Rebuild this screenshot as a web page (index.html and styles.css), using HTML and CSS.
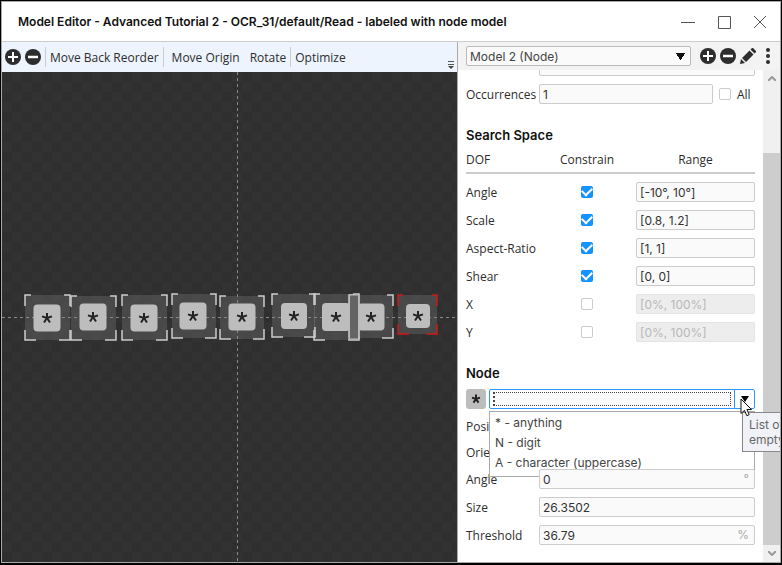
FILE: index.html
```html
<!DOCTYPE html>
<html lang="en">
<head>
    <meta charset="UTF-8">
    <meta name="viewport" content="width=device-width, initial-scale=1.0">
    <title>Model Editor</title>
    <link rel="stylesheet" href="styles.css">
</head>
<body>
    <!-- shared symbols -->
    <svg class="defs" aria-hidden="true">
        <symbol id="icon-plus" viewBox="0 0 16 16">
            <circle cx="8" cy="8" r="8" fill="#2d2d2d"/>
            <path d="M8 3v10M3 8h10" stroke="#fff" stroke-width="2"/>
        </symbol>
        <symbol id="icon-minus" viewBox="0 0 16 16">
            <circle cx="8" cy="8" r="8" fill="#2d2d2d"/>
            <path d="M3 8h10" stroke="#fff" stroke-width="2.5"/>
        </symbol>
    </svg>

    <div class="window">
        <header class="titlebar">
            <h1>Model Editor - Advanced Tutorial 2 - OCR_31/default/Read - labeled with node model</h1>
            <div class="window-buttons">
                <button aria-label="Minimize"><svg width="14" height="14"><path d="M0 7.5h14"/></svg></button>
                <button aria-label="Maximize"><svg width="14" height="14"><path d="M1.5 1.5h12v12h-12z"/></svg></button>
                <button aria-label="Close"><svg width="14" height="14"><path d="M1 1l12 12M13 1L1 13"/></svg></button>
            </div>
        </header>

        <main class="content">
            <section class="editor">
                <div class="toolbar">
                    <button aria-label="Add"><svg width="16" height="16"><use href="#icon-plus"/></svg></button>
                    <button aria-label="Remove"><svg width="16" height="16"><use href="#icon-minus"/></svg></button>
                    <div class="tool-group">
                        <button>Move Back</button>
                        <button>Reorder</button>
                    </div>
                    <div class="tool-group wide">
                        <button>Move Origin</button>
                        <button>Rotate</button>
                    </div>
                    <div class="tool-group">
                        <button>Optimize</button>
                    </div>
                    <button class="overflow" aria-label="More tools"><svg width="6" height="8"><path d="M0 .5h6M0 3.5h6" stroke="#555"/><path d="M0 5h6l-3 3z" fill="#444"/></svg></button>
                </div>
                <svg class="canvas" id="canvas">
                    <defs>
                        <pattern id="checker" width="20" height="20" patternUnits="userSpaceOnUse">
                            <rect width="20" height="20" fill="#323232"/>
                            <path d="M0 0h10v10H0zM10 10h10v10H10z" fill="#2f2f2f"/>
                        </pattern>
                    </defs>
                    <rect width="100%" height="100%" fill="url(#checker)"/>
                    <g id="nodes"></g>
                    <line class="guide" x1="235" y1="0" x2="235" y2="100%"/>
                    <line class="guide" x1="0" y1="245" x2="100%" y2="245"/>
                    <g id="tiles"></g>
                </svg>
            </section>

            <aside class="panel">
                <div class="panel-head">
                    <select class="model-select" aria-label="Model">
                        <option>Model 2 (Node)</option>
                    </select>
                    <button aria-label="Add model"><svg width="16" height="16"><use href="#icon-plus"/></svg></button>
                    <button aria-label="Remove model"><svg width="16" height="16"><use href="#icon-minus"/></svg></button>
                    <button aria-label="Rename model"><svg width="16" height="16" viewBox="0 0 16 16"><path d="M0 16l1-5 4 4zM2 10l7.5-7.5 4 4L6 14zM10.5 1.5L12 0h1l3 3v1l-1.5 1.5z" fill="#2d2d2d"/></svg></button>
                    <button class="menu" aria-label="Menu"><svg width="4" height="16"><g fill="#2d2d2d"><circle cx="2" cy="2" r="2"/><circle cx="2" cy="8" r="2"/><circle cx="2" cy="14" r="2"/></g></svg></button>
                </div>

                <div class="panel-body">
                    <form class="fields">
                        <div class="row first">
                            <span></span>
                            <input type="text" aria-label="Type">
                        </div>
                        <div class="row occurrences">
                            <label for="occ">Occurrences</label>
                            <input type="text" id="occ" value="1">
                            <label class="all"><input type="checkbox"> All</label>
                        </div>

                        <h2>Search Space</h2>
                        <table class="dof">
                            <thead>
                                <tr><th>DOF</th><th>Constrain</th><th>Range</th></tr>
                            </thead>
                            <tbody>
                                <tr><td><label for="angle">Angle</label></td><td><input type="checkbox" aria-label="Constrain angle" checked></td><td><input type="text" id="angle" value="[-10°, 10°]"></td></tr>
                                <tr><td><label for="scale">Scale</label></td><td><input type="checkbox" aria-label="Constrain scale" checked></td><td><input type="text" id="scale" value="[0.8, 1.2]"></td></tr>
                                <tr><td><label for="aspect">Aspect-Ratio</label></td><td><input type="checkbox" aria-label="Constrain aspect ratio" checked></td><td><input type="text" id="aspect" value="[1, 1]"></td></tr>
                                <tr><td><label for="shear">Shear</label></td><td><input type="checkbox" aria-label="Constrain shear" checked></td><td><input type="text" id="shear" value="[0, 0]"></td></tr>
                                <tr><td><label for="x">X</label></td><td><input type="checkbox" aria-label="Constrain x"></td><td><input type="text" id="x" value="[0%, 100%]" disabled></td></tr>
                                <tr><td><label for="y">Y</label></td><td><input type="checkbox" aria-label="Constrain y"></td><td><input type="text" id="y" value="[0%, 100%]" disabled></td></tr>
                            </tbody>
                        </table>

                        <h2>Node</h2>
                        <div class="node-picker">
                            <svg width="20" height="20" aria-hidden="true"><rect width="20" height="20" rx="3" fill="#bdbdbd"/><path class="star" d="M10 10V5.5M10 10l4-1.400M10 10l2.500 3.600M10 10l-2.500 3.600M10 10L6 8.600"/></svg>
                            <div class="combo">
                                <input type="text" aria-label="Node label">
                                <button type="button" aria-label="Show labels"><svg width="8" height="6"><path d="M0 0h8l-4 6z"/></svg></button>
                                <ul class="options">
                                    <li>* - anything</li>
                                    <li>N - digit</li>
                                    <li>A - character (uppercase)</li>
                                </ul>
                                <svg class="pointer" width="13" height="19" viewBox="0 0 13 19"><path d="M1 1v14.5l3.5-3.2 2.3 5.4 2.4-1-2.3-5.2h4.600z" fill="#fff" stroke="#111"/></svg>
                                <div class="tooltip" role="tooltip">List of<br>empty</div>
                            </div>
                        </div>
                        <div class="row short">
                            <label for="pos">Position</label>
                            <input type="text" id="pos">
                        </div>
                        <div class="row short">
                            <label for="orient">Orientation</label>
                            <input type="text" id="orient">
                        </div>
                        <div class="row">
                            <label for="node-angle">Angle</label>
                            <div class="unit-field"><input type="text" id="node-angle" value="0"><span>°</span></div>
                        </div>
                        <div class="row">
                            <label for="size">Size</label>
                            <input type="text" id="size" value="26.3502">
                        </div>
                        <div class="row">
                            <label for="threshold">Threshold</label>
                            <div class="unit-field"><input type="text" id="threshold" value="36.79"><span>%</span></div>
                        </div>
                    </form>
                    <div class="scrollbar">
                        <button aria-label="Scroll up"><svg width="8" height="5"><path d="M0 5l4-4 4 4"/></svg></button>
                        <div class="thumb"></div>
                        <button aria-label="Scroll down"><svg width="8" height="5"><path d="M0 0l4 4 4-4"/></svg></button>
                    </div>
                </div>
            </aside>
        </main>
    </div>

    <script src="nodes.js"></script>
</body>
</html>
```
FILE: styles.css
```css
* {
    box-sizing: border-box;
}
body {
    margin: 0;
    font-family: "Open Sans", sans-serif;
    font-size: 12px;
    color: #2d2d2d;
    background: #fff;
}
button {
    border: none;
    background: none;
    padding: 0;
    font: inherit;
    color: inherit;
    display: flex;
    align-items: center;
    justify-content: center;
}
svg {
    display: block;
}
.defs {
    position: absolute;
    width: 0;
    height: 0;
}
.window {
    height: 100vh;
    display: flex;
    flex-direction: column;
    border: 1px solid #000;
    border-bottom-width: 2px;
    box-shadow: inset 0 0 0 1px #aaa;
    padding: 1px;
    overflow: hidden;
}

/* title bar */
.titlebar {
    flex: 0 0 40px;
    display: flex;
    align-items: center;
    justify-content: space-between;
    padding: 0 13px 0 16px;
    border-bottom: 1px solid #ccc;
}
h1 {
    margin: 0;
    font: 600 12px/20px Inter, sans-serif;
    color: #111;
    white-space: nowrap;
}
.window-buttons {
    display: flex;
    gap: 22px;
}
.window-buttons path {
    fill: none;
    stroke: #555;
}
.content {
    flex: 1;
    min-height: 0;
    display: flex;
}

/* left side */
.editor {
    flex: 1;
    min-width: 0;
    display: flex;
    flex-direction: column;
}
.toolbar {
    flex: 0 0 30px;
    display: flex;
    align-items: center;
    gap: 4px;
    padding-left: 3px;
    background: #edf4fd;
    white-space: nowrap;
}
.tool-group {
    display: flex;
    align-items: center;
    gap: 3px;
    height: 20px;
    padding-left: 4px;
    border-left: 1px solid #ccc;
}
.tool-group.wide {
    gap: 10px;
    padding-left: 8px;
}
.overflow {
    align-self: flex-end;
    margin: 0 3px 3px auto;
}
.canvas {
    flex: 1;
    min-height: 0;
    width: 100%;
}
.guide {
    stroke: #888;
    stroke-dasharray: 3 3;
    shape-rendering: crispEdges;
}
.star {
    fill: none;
    stroke: #222;
    stroke-width: 2;
}

/* right side */
.panel {
    flex: 0 0 323px;
    display: flex;
    flex-direction: column;
    border-left: 1px solid #aaa;
}
.panel-head {
    flex: 0 0 28px;
    display: flex;
    align-items: center;
    gap: 4px;
    padding: 0 10px 0 8px;
    background: #f3f3f3;
}
.model-select {
    flex: 1;
    height: 20px;
    margin-right: 5px;
    padding: 0 3px;
    border: 1px solid #bbb;
    border-radius: 2px;
    appearance: none;
    color: #444;
    font: 12px Inter, sans-serif;
    background: #fafafa conic-gradient(from -34deg at 50% 100%, #111 68deg, transparent 0) right 5px center / 9px 7px no-repeat;
}
.menu {
    margin-left: 6px;
}
.panel-body {
    flex: 1;
    min-height: 0;
    display: flex;
    overflow: hidden;
}
.fields {
    flex: 1;
    min-width: 0;
    padding: 0 8px;
}
.fields input {
    font: 12px Inter, sans-serif;
    color: #333;
}
.fields input[type="text"] {
    width: 100%;
    height: 20px;
    padding: 0 3px;
    border: 1px solid #ccc;
    border-radius: 2px;
    background: #fafafa;
}
.fields input[type="text"]:disabled {
    color: #b8b8b8;
    background: #ededed;
    border-color: #e4e4e4;
}
input[type="checkbox"] {
    appearance: none;
    width: 12px;
    height: 12px;
    margin: 0;
    border: 1px solid #ccc;
    border-radius: 2px;
    background: #fff;
}
input[type="checkbox"]:checked {
    border: none;
    background: #1492ff;
    place-items: center;
}
input[type="checkbox"]:checked::before {
    content: "";
    width: 8px;
    height: 5px;
    margin-bottom: 3px;
    border: solid #fff;
    border-width: 0 0 2px 2px;
    transform: rotate(-45deg);
}
.row {
    display: grid;
    grid-template-columns: 73px 1fr;
    align-items: center;
    height: 28px;
}
.row.short {
    height: 26px;
}
.row.first {
    margin-top: -18px;
}
.row.occurrences {
    grid-template-columns: 73px 1fr 42px;
}
.all {
    display: flex;
    align-items: center;
    gap: 6px;
    padding-left: 6px;
}
h2 {
    margin: 0;
    font: 600 13px/20px Inter, sans-serif;
    color: #111;
}
.occurrences + h2 {
    margin-top: 17px;
}
.dof {
    width: 100%;
    border-collapse: collapse;
    table-layout: fixed;
}
.dof th {
    height: 28px;
    padding: 2px 0 0;
    font-weight: normal;
    border-bottom: 2px solid #ccc;
}
.dof th:first-child {
    width: 72px;
    text-align: left;
}
.dof th:last-child {
    width: 119px;
}
.dof td {
    height: 28px;
    padding: 0;
    white-space: nowrap;
}
.dof td:nth-child(2) {
    text-align: center;
}
.dof td input {
    display: block;
    margin: 0 auto;
}
.dof input[type="checkbox"]:checked {
    display: grid;
}
.dof tbody::before {
    content: "";
    display: block;
    height: 4px;
}
.dof + h2 {
    margin-top: 17px;
}

/* node label drop-down */
.node-picker {
    display: flex;
    gap: 3px;
    margin: 6px 0 4px;
}
.combo {
    flex: 1;
    position: relative;
    display: flex;
    height: 20px;
    border: 1px solid #2997ff;
    border-radius: 2px;
    background: #fff;
}
.combo input[type="text"] {
    flex: 1;
    height: 14px;
    margin: 2px 3px;
    border: 1px dotted #444;
    border-left-width: 2px;
    border-radius: 0;
}
.combo button {
    width: 20px;
    border-left: 1px solid #2997ff;
}
.options {
    position: absolute;
    top: 21px;
    left: -1px;
    right: -1px;
    margin: 0;
    padding: 1px 5px 3px;
    list-style: none;
    border: 1px solid #aaa;
    background: #fff;
    font: 12px/20px Inter, sans-serif;
    color: #444;
}
.tooltip {
    position: absolute;
    top: 22px;
    left: 252px;
    padding: 4px 6px;
    border: 1px solid #888;
    background: #f1f2f7;
    font: 12px/15px Inter, sans-serif;
    color: #666;
    white-space: nowrap;
}
.pointer {
    position: absolute;
    top: 8px;
    right: 1px;
    z-index: 1;
}
.unit-field {
    position: relative;
}
.unit-field span {
    position: absolute;
    top: 0;
    right: 6px;
    font: 12px/20px Inter, sans-serif;
    color: #aaa;
}

/* scrollbar */
.scrollbar {
    flex: 0 0 17px;
    display: flex;
    flex-direction: column;
    background: #f0f0f0;
}
.scrollbar button {
    height: 17px;
}
.scrollbar path {
    fill: none;
    stroke: #999;
    stroke-width: 2;
}
.thumb {
    flex: 1;
    margin-top: 66px;
    background: #cdcdcd;
}
```
FILE: nodes.js
```js
// x, y and size of each character box, then centre and size of its label tile
const nodes = [
    { x: 23, y: 223, w: 45, h: 45, cx: 45, cy: 246, s: 27 },
    { x: 69, y: 224, w: 45, h: 44, cx: 91, cy: 245, s: 27 },
    { x: 120, y: 223, w: 45, h: 45, cx: 142, cy: 246, s: 27 },
    { x: 170, y: 222, w: 44, h: 44, cx: 191, cy: 244, s: 27 },
    { x: 218, y: 224, w: 44, h: 43, cx: 240, cy: 245, s: 27 },
    { x: 270, y: 222, w: 43, h: 43, cx: 292, cy: 244, s: 26 },
    { x: 312, y: 222, w: 45, h: 46, cx: 334, cy: 245, s: 28 },
    { x: 347, y: 223, w: 44, h: 43, cx: 369, cy: 245, s: 27 },
    { x: 396, y: 223, w: 39, h: 39, cx: 416, cy: 244, s: 24, selected: true }
];

let boxes = '';
let tiles = '';
for (const n of nodes) {
    const r = n.x + n.w;
    const b = n.y + n.h;
    const c = n.selected ? 5 : 6;
    const color = n.selected ? '#d01818' : '#ccc';
    boxes += `<rect x="${n.x}" y="${n.y}" width="${n.w}" height="${n.h}" fill="#fff" fill-opacity=".12"/>`;
    boxes += `<path d="M${n.x} ${n.y + 11}V${n.y}h${c}M${r - c} ${n.y}H${r}v11M${r} ${b - 10}V${b}h-11M${n.x + 11} ${b}H${n.x}v-10" fill="none" stroke="${color}" stroke-width="1.5"/>`;
    tiles += `<rect x="${n.cx - n.s / 2}" y="${n.cy - n.s / 2}" width="${n.s}" height="${n.s}" rx="4" fill="#bdbdbd"/>`;
    tiles += `<path class="star" d="M${n.cx} ${n.cy}v-5M${n.cx} ${n.cy}l5 -1.6M${n.cx} ${n.cy}l3 4.5M${n.cx} ${n.cy}l-3 4.5M${n.cx} ${n.cy}l-5 -1.6"/>`;
}
// overlap of the two neighbouring boxes
tiles += '<rect x="347.5" y="223" width="9" height="44" fill="#646464" stroke="#bbb"/>';

document.getElementById('nodes').innerHTML = boxes;
document.getElementById('tiles').innerHTML = tiles;
```
